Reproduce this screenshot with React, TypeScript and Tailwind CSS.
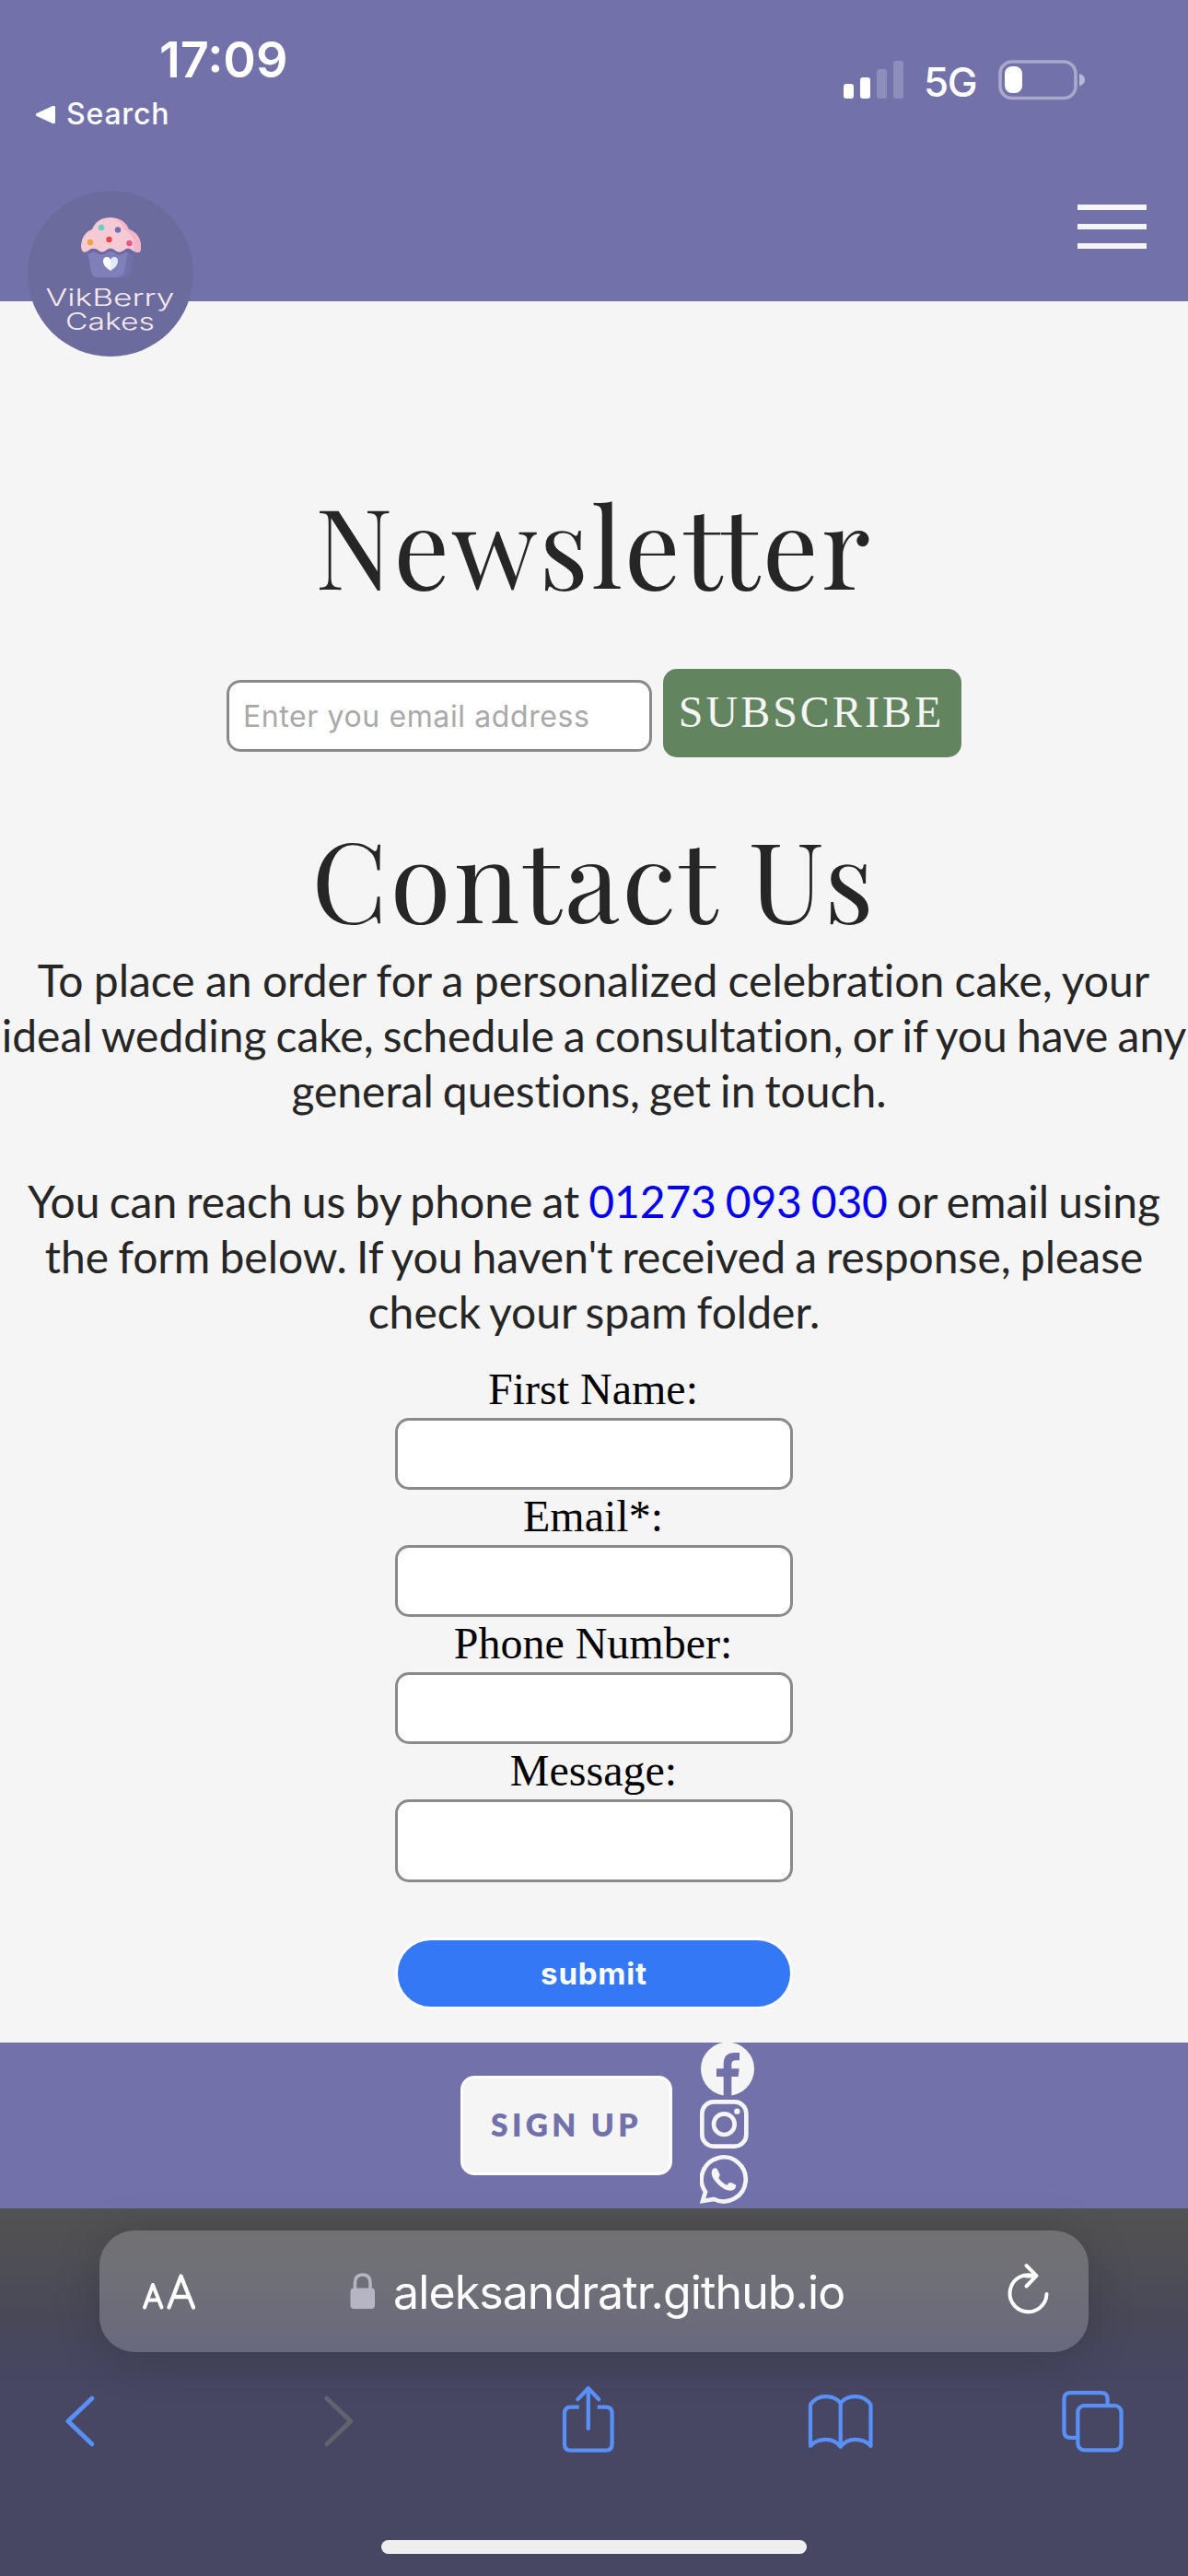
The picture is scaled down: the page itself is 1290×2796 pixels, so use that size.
import React from "react";

function StatusBar() {
  return (
    <div className="flex h-[150px] justify-between font-[Inter] text-white">
      <div className="flex flex-col pl-[37px]">
        <div className="mt-[33px] h-[64px] pl-[136px] text-[54px] leading-[64px] font-semibold tracking-[0px]">
          17:09
        </div>
        <div className="mt-[7px] flex h-[40px] items-center gap-[11px]">
          <svg width="24" height="24" viewBox="0 0 24 24" fill="currentColor">
            <path d="M3 11 L20 3 Q23 2 23 4.500 V20.500 Q23 23 20 22 L3 14 Q0.500 12.500 3 11 Z" />
          </svg>
          <span className="text-[32px] leading-[40px] font-medium tracking-[0.8px]">Search</span>
        </div>
      </div>
      <div className="mt-[62px] mr-[110px] flex h-[48px] items-center">
        <div className="mr-[22px] flex h-[42px] items-end gap-[7px]">
          <div className="h-[16px] w-[11px] rounded-[3px] bg-white" />
          <div className="h-[23px] w-[11px] rounded-[3px] bg-white" />
          <div className="h-[32px] w-[11px] rounded-[3px] bg-white/20" />
          <div className="h-[41px] w-[11px] rounded-[3px] bg-white/20" />
        </div>
        <span className="mt-[6px] w-[81px] text-[44px] leading-[48px] font-medium tracking-[-1.5px]">5G</span>
        <svg width="96" height="48" viewBox="0 0 96 48" fill="none">
          <rect x="2" y="5" width="82" height="39.500" rx="13" stroke="white" strokeOpacity="0.4" strokeWidth="3.600" />
          <rect x="7" y="10" width="19" height="29" rx="8" fill="white" />
          <path d="M88 18 Q94 19.500 94 24.500 Q94 29.500 88 31.500 Z" fill="white" fillOpacity="0.5" />
        </svg>
      </div>
    </div>
  );
}

function Logo() {
  return (
    <svg className="absolute top-[207px] left-[30px]" width="180" height="180" viewBox="0 0 180 180">
      <circle cx="90" cy="90" r="90" fill="#6c6b9d" />
      <path d="M65 66 H116 L112 88 Q111 94 105 94 H76 Q70 94 69 88 Z" fill="#7170aa" />
      <path d="M65 66 H109 L105 87 Q104 94 97 94 H76 Q70 94 69 88 Z" fill="#807fba" />
      <path d="M65 65 H115 L114.500 70 Q109 64 104 68 Q99 72 94 67 Q90 64 86 67 Q81 71 76 68 Q71 64 66 69 Z" fill="#6867a3" />
      <path d="M70 42 Q75 29 91 29 Q105 30 110 42 Q123 47 123 61 Q123 67 120 67 Q117 67 114 65 Q109 60 104 65 Q99 69 94 64 Q90 61 86 64 Q81 69 76 64 Q70 61 66 65 Q62 68 60 66 Q58 64 58 60 Q59 46 70 42 Z" fill="#f6cad4" />
      <path d="M91 29 Q105 30 110 42 Q123 47 123 61 Q123 67 120 67 Q117 67 115 65 Q118 49 105 42 Q101 32 91 29 Z" fill="#f4b4ca" />
      <circle cx="80" cy="40" r="3.200" fill="#5ed3c4" />
      <circle cx="98" cy="42.500" r="3.200" fill="#706fb0" />
      <circle cx="68" cy="56" r="3.200" fill="#f3a43c" />
      <circle cx="88.500" cy="53" r="3.200" fill="#e24a43" />
      <circle cx="110.500" cy="57" r="3.200" fill="#ea5781" />
      <path d="M90 87 Q82 82 82 76.500 Q82 72 86 72 Q89 72 90 75 Z" fill="#ffffff" />
      <path d="M90 87 Q98 82 98 76.500 Q98 72 94 72 Q91 72 90 75 Z" fill="#e1ecf9" />
      <g fill="#f7e9f0" fontFamily="Inter, sans-serif" fontWeight="300" fontSize="25.500">
        <text x="19.500" y="125" textLength="140" lengthAdjust="spacingAndGlyphs">VikBerry</text>
        <text x="41" y="151" textLength="97" lengthAdjust="spacingAndGlyphs">Cakes</text>
      </g>
    </svg>
  );
}

function SiteHeader() {
  return (
    <header className="relative h-[327px] bg-[#7271aa]">
      <StatusBar />
      <Logo />
      <button aria-label="Menu" className="mt-[72px] mr-[45px] ml-auto flex w-[75px] flex-col gap-[15px]">
        <span className="h-[6px] w-full bg-[#f5f5f5]" />
        <span className="h-[6px] w-full bg-[#f5f5f5]" />
        <span className="h-[6px] w-full bg-[#f5f5f5]" />
      </button>
    </header>
  );
}

function Newsletter() {
  return (
    <section className="flex flex-col items-center">
      <h1 className="mt-[183px] h-[160px] text-center font-['Playfair_Display','Liberation_Serif',serif] text-[120px] leading-[160px] tracking-[3px] text-[#262626]">
        Newsletter
      </h1>
      <div className="mt-[56px] flex h-[96px] gap-[12px]">
        <input
          placeholder="Enter you email address"
          className="mt-[12px] h-[78px] w-[462px] rounded-[15px] border-[3px] border-[#8a8a8c] bg-white px-[15px] font-[Inter] text-[32px] tracking-[0.6px] placeholder:text-[#a9a9a9]"
        />
        <button className="h-[96px] w-[324px] rounded-[15px] bg-[#62845e] pr-[2px] pb-[2px] font-['Liberation_Serif',serif] text-[48px] leading-[92px] tracking-[3px] text-[#f5f5f5]">
          SUBSCRIBE
        </button>
      </div>
    </section>
  );
}

const fields = ["First Name:", "Email*:", "Phone Number:"];

function Contact() {
  return (
    <section className="flex flex-col items-center">
      <h2 className="mt-[50px] h-[162px] text-center font-['Playfair_Display','Liberation_Serif',serif] text-[120px] leading-[160px] tracking-[3px] text-[#262626]">
        Contact Us
      </h2>
      <div className="w-full text-center font-[Lato] text-[48px] leading-[60px] whitespace-nowrap text-[#262626] [font-variant-ligatures:none] [word-spacing:-2.200px]">
        <p>
          <span className="block pr-[1px] [word-spacing:-1px]">
            To place an order for a personalized celebration cake, your
          </span>
          <span className="block">ideal wedding cake, schedule a consultation, or if you have any</span>
          <span className="block pr-[11px]">general questions, get in touch.</span>
        </p>
        <p className="mt-[60px]">
          <span className="block">
            You can reach us by phone at <a className="tracking-[-0.150px] text-[#0000ee]">01273 093 030</a> or email
            using
          </span>
          <span className="block">the form below. If you haven't received a response, please</span>
          <span className="block">check your spam folder.</span>
        </p>
      </div>
      <form className="mt-[25px] flex w-[432px] flex-col text-center font-['Liberation_Serif',serif] text-[48px] leading-[58px] text-black">
        {fields.map((label) => (
          <label key={label} className="flex flex-col whitespace-nowrap">
            <span className="h-[60px] pr-[2px]">{label}</span>
            <input className="h-[78px] w-full rounded-[15px] border-[3px] border-[#8a8a8c] bg-white" />
          </label>
        ))}
        <label className="flex flex-col">
          <span className="h-[60px] pr-[1px]">Message:</span>
          <textarea className="h-[90px] w-full resize-none rounded-[15px] border-[3px] border-[#8a8a8c] bg-white" />
        </label>
        <button
          type="button"
          className="mt-[60px] h-[78px] rounded-full border-[3px] border-white bg-[#3478f6] font-[Inter] text-[33px] leading-[70px] font-bold tracking-[0.8px] text-white"
        >
          submit
        </button>
      </form>
    </section>
  );
}

function SiteFooter() {
  return (
    <footer className="mt-[36px] flex h-[180px] bg-[#7271aa] pl-[500px]">
      <button className="mt-[36px] h-[108px] w-[230px] rounded-[15px] border-[3px] border-white bg-[#f5f5f5] pb-[2px] font-[Lato] text-[33.500px] leading-[98px] font-extrabold tracking-[4.400px] whitespace-nowrap text-[#7271aa]">
        SIGN UP
      </button>
      <div className="ml-[30px] flex flex-col text-[#f5f5f5]">
        <svg width="60" height="60" viewBox="0 0 180 180">
          <circle cx="90" cy="86" r="87" fill="currentColor" />
          <path d="M77 180 V111 H54 V85 H77 V70 Q77 33 113 33 H129 V58 H117 Q103 58 103 71 V85 H128 L125 111 H103 V180 Z" fill="#7271aa" />
        </svg>
        <svg width="60" height="60" viewBox="0 0 180 180" fill="none" stroke="currentColor" strokeWidth="14">
          <rect x="7" y="13" width="144" height="145" rx="38" />
          <circle cx="79" cy="86" r="34" />
          <circle cx="121" cy="44" r="9.500" fill="currentColor" stroke="none" />
        </svg>
        <svg width="60" height="60" viewBox="0 0 180 180">
          <path d="M9 156 L18 126 A72 72 0 1 1 46 150 Z" fill="none" stroke="currentColor" strokeWidth="14" />
          <path d="M39 57 Q42 48 50 49 Q56 49 58 55 L65 70 Q66 74 61 81 Q70 96 88 104 L95 97 Q98 95 102 96 L116 103 Q119 105 117 111 Q113 122 97 122 Q78 121 57 100 Q33 75 39 57 Z" fill="currentColor" />
        </svg>
      </div>
    </footer>
  );
}

function BrowserChrome() {
  return (
    <div className="h-[399px] bg-[linear-gradient(180deg,#525253_0px,#505054_40px,#484859_120px,#474663_190px,#474663_399px)] px-[108px] pt-[24px]">
      <div className="flex h-[132px] w-[1074px] items-center rounded-[38px] bg-[linear-gradient(180deg,#717174,#6f6f78_45%,#69697e)] font-[Inter] text-white shadow-[0_6px_50px_rgba(0,0,0,0.18)]">
        <svg className="mt-[2px] ml-[46px]" width="60" height="40" viewBox="0 0 60 40" fill="none" stroke="white" strokeLinecap="round" strokeLinejoin="round">
          <path d="M3 36.500 L12 12 L21.500 36.500 M6.500 28.500 H18" strokeWidth="4" />
          <path d="M29.500 36.500 L42.500 2.500 L56 36.500 M34.500 25 H51" strokeWidth="4.300" />
        </svg>
        <svg className="ml-[166px]" width="28" height="40" viewBox="0 0 28 40" fill="none">
          <path d="M5.500 18 V11 Q5.500 2 13.700 2 Q22 2 22 11 V18" stroke="#b6b5c3" strokeWidth="3.500" />
          <rect x="0.500" y="16.500" width="26.500" height="22.500" rx="4" fill="#b6b5c3" />
        </svg>
        <span className="mt-[2px] ml-[19px] w-[500px] text-[50px] leading-[60px] tracking-[-0.900px] whitespace-nowrap">
          aleksandratr.github.io
        </span>
        <svg className="mb-[2px] ml-[163px]" width="50" height="60" viewBox="0 0 50 60" fill="none" stroke="white" strokeWidth="4" strokeLinecap="round" strokeLinejoin="round">
          <path d="M34 14.700 A20 20 0 1 0 46.500 34 M24 14.500 H35 M24.500 3 L35.500 14.200 L24.500 25.500" />
        </svg>
      </div>
      <div className="-mx-[38px] mt-[34px] flex h-[78px] items-center text-[#5990f8]">
        <svg className="mt-[2px]" width="34" height="58" viewBox="0 0 34 58" fill="none" stroke="currentColor" strokeWidth="5" strokeLinecap="round" strokeLinejoin="round">
          <path d="M30 5 L4 30 L30 55" />
        </svg>
        <svg className="mt-[2px] ml-[247px]" width="36" height="58" viewBox="0 0 36 58" fill="none" stroke="#63626f" strokeWidth="5" strokeLinecap="round" strokeLinejoin="round">
          <path d="M4 5 L30 30 L4 55" />
        </svg>
        <svg className="mb-[2px] ml-[224px]" width="58" height="76" viewBox="0 0 58 76" fill="none" stroke="currentColor" strokeWidth="4.300" strokeLinecap="round" strokeLinejoin="round">
          <path d="M29 49 V5 M17.500 17 L29 5 L40.500 17" />
          <path d="M19 25.500 H10 Q3 25.500 3 32.500 V66 Q3 73 10 73 H48 Q55 73 55 66 V32.500 Q55 25.500 48 25.500 H39" strokeLinecap="butt" />
        </svg>
        <svg className="mt-[6px] ml-[209px]" width="72" height="64" viewBox="0 0 72 64" fill="none" stroke="currentColor" strokeWidth="4.300" strokeLinecap="round" strokeLinejoin="round">
          <path d="M36 11 Q30 4 20 4 Q9 4 3 13 V58 Q9 51 20 51 Q30 51 36 59 Q42 51 52 51 Q63 51 69 58 V13 Q63 4 52 4 Q42 4 36 11 V59" />
        </svg>
        <svg className="mt-[3px] ml-[204px]" width="68" height="72" viewBox="0 0 68 72" fill="none" stroke="currentColor" strokeWidth="4.300">
          <rect x="17.500" y="19" width="47.500" height="48.500" rx="7" />
          <path d="M50 19 V12 Q50 5 43 5 H9.500 Q2.500 5 2.500 12 V47 Q2.500 54 9.500 54 H17" />
        </svg>
      </div>
      <div className="mx-auto mt-[92px] h-[15px] w-[462px] rounded-full bg-[#eeeeee]" />
    </div>
  );
}

export default function App() {
  return (
    <div className="flex h-[2796px] w-[1290px] flex-col overflow-hidden bg-[#f5f5f5]">
      <SiteHeader />
      <main>
        <Newsletter />
        <Contact />
      </main>
      <SiteFooter />
      <BrowserChrome />
    </div>
  );
}
